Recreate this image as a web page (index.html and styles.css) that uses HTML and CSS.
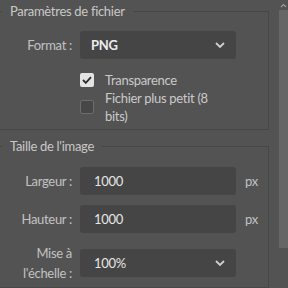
FILE: index.html
```
<!DOCTYPE html>
<html lang="fr">
<head>
    <meta charset="UTF-8">
    <meta name="viewport" content="width=device-width, initial-scale=1.0">
    <title>Exporter</title>
    <link rel="stylesheet" href="styles.css">
</head>
<body>
    <div class="panel">
        <fieldset class="group group-file">
            <legend>Paramètres de fichier</legend>
            <div class="row">
                <label class="row-label">Format :</label>
                <div class="select">
                    <span class="select-value strong">PNG</span>
                    <svg class="chevron" width="10" height="6" viewBox="0 0 10 6"><path d="M1 1l4 4 4-4" fill="none" stroke="#cfcfcf" stroke-width="1.8"/></svg>
                </div>
            </div>
            <div class="checks">
                <div class="check-row">
                    <span class="checkbox checked">
                        <svg width="10" height="8" viewBox="0 0 10 8"><path d="M1 4l2.8 2.8L9 1.2" fill="none" stroke="#2e2e2e" stroke-width="1.9"/></svg>
                    </span>
                    <span class="check-label">Transparence</span>
                </div>
                <div class="check-row">
                    <span class="checkbox"></span>
                    <span class="check-label narrow">Fichier plus petit (8 bits)</span>
                </div>
            </div>
        </fieldset>

        <fieldset class="group group-size">
            <legend>Taille de l'image</legend>
            <div class="row">
                <label class="row-label">Largeur :</label>
                <div class="input">1000</div>
                <span class="unit">px</span>
            </div>
            <div class="row">
                <label class="row-label">Hauteur :</label>
                <div class="input">1000</div>
                <span class="unit">px</span>
            </div>
            <div class="row">
                <label class="row-label two-lines">Mise à<br>l'échelle :</label>
                <div class="select">
                    <span class="select-value">100%</span>
                    <svg class="chevron" width="10" height="6" viewBox="0 0 10 6"><path d="M1 1l4 4 4-4" fill="none" stroke="#cfcfcf" stroke-width="1.8"/></svg>
                </div>
            </div>
        </fieldset>
    </div>
    <div class="scrollbar">
        <div class="scroll-up">
            <svg width="7" height="5" viewBox="0 0 7 5"><path d="M1 4l2.5-2.5L6 4" fill="none" stroke="#9a9a9a" stroke-width="1.2"/></svg>
        </div>
        <div class="thumb"></div>
    </div>
</body>
</html>
```

FILE: styles.css
```
body {
    font-family: Lato, "Open Sans", sans-serif;
    font-size: 13px;
    letter-spacing: -0.3px;
    color: #c2c2c2;
    background-color: #535353;
    margin: 0;
    height: 288px;
    overflow: hidden;
    display: flex;
}
.panel {
    flex: 1;
    padding: 3px 7px 0 0;
}
.group {
    margin: 0;
    padding: 0;
    min-width: 0;
    border: 1px solid #474747;
    border-left: none;
}
.group legend {
    margin-left: 2px;
    padding: 0 8px;
    line-height: 16px;
    color: #c8c8c8;
}
.group-file {
    padding-top: 12px;
    padding-bottom: 4px;
}
.group-size {
    margin-top: 8px;
    padding-top: 13px;
    padding-bottom: 4px;
    display: flex;
    flex-direction: column;
    gap: 10px;
}
.row {
    display: grid;
    grid-template-columns: 72px 156px auto;
    column-gap: 8px;
    align-items: center;
}
.row-label {
    text-align: right;
    white-space: nowrap;
}
.two-lines {
    line-height: 20px;
}
.select,
.input {
    height: 28px;
    background-color: #454545;
    border-radius: 3px;
    display: flex;
    align-items: center;
    color: #e6e6e6;
}
.select {
    justify-content: space-between;
    padding: 0 11px 0 14px;
}
.input {
    padding-left: 14px;
}
.select-value.strong {
    margin-left: -3px;
    font-weight: bold;
    color: #ececec;
}
.chevron {
    display: block;
}
.unit {
    margin-left: 1px;
}
.checks {
    margin: 12px 0 0 80px;
}
.check-row {
    display: flex;
    align-items: center;
    line-height: 18px;
}
.checkbox {
    box-sizing: border-box;
    width: 14px;
    height: 14px;
    border: 1.5px solid #6c6c6c;
    border-radius: 2px;
    background-color: #474747;
    margin-right: 11px;
    flex-shrink: 0;
    display: flex;
    align-items: center;
    justify-content: center;
}
.checkbox.checked {
    border: none;
    background-color: #e4e4e4;
}
.check-label {
    color: #cacaca;
}
.check-label.narrow {
    width: 115px;
}
.scrollbar {
    width: 12px;
    display: flex;
    flex-direction: column;
    align-items: flex-end;
    background-color: #535353;
}
.scroll-up {
    width: 9px;
    height: 10px;
    display: flex;
    justify-content: center;
    align-items: center;
}
.thumb {
    width: 9px;
    height: 238px;
    background-color: #666666;
}
```
